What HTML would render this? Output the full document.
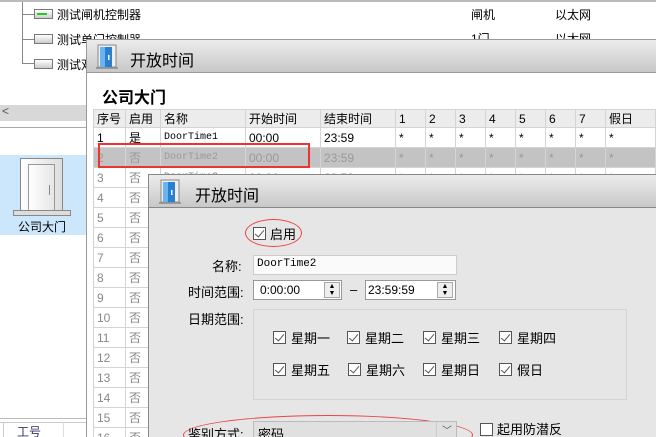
<!DOCTYPE html>
<html><head><meta charset="utf-8"><style>
*{margin:0;padding:0;box-sizing:border-box}
html{overflow:hidden}
body{width:656px;height:437px;overflow:hidden;position:relative;background:#fff;font-family:"Liberation Sans","Noto Sans CJK SC",sans-serif;font-size:12px;color:#000}
.a{position:absolute;white-space:nowrap}
.mono{font-family:"Liberation Mono","Noto Sans CJK SC",monospace}
td.mono{font-size:10px}
.tb{background:linear-gradient(#ececec,#c8c8c8);border-bottom:1px solid #999}
table{border-collapse:collapse;position:absolute;left:93px;top:109px;table-layout:fixed}
td{border:1px solid #d4d4d4;height:20px;padding:0 3px;font-size:12px;white-space:nowrap;overflow:hidden}
tr.h td{height:17px;background:#ececec;font-size:12px}
tr.g td{background:#c3c3c3;color:#999}
tr.d td{color:#888}
.cb{position:absolute;width:13px;height:13px;border:1px solid #555;background:#fff}
.cb.c::after{content:"";position:absolute;left:3px;top:0px;width:4px;height:8px;border:solid #555;border-width:0 1.5px 1.5px 0;transform:rotate(40deg)}
</style></head><body>
<div class="a" style="left:0;top:0;width:656px;height:2px;background:#bbb"></div>
<div class="a" style="left:22px;top:2px;width:1px;height:62px;background:#888"></div>
<div class="a" style="left:22px;top:14px;width:12px;height:1px;background:#888"></div>
<div class="a" style="left:22px;top:39px;width:12px;height:1px;background:#888"></div>
<div class="a" style="left:22px;top:63px;width:12px;height:1px;background:#888"></div>
<div class="a" style="left:34px;top:9px;width:19px;height:10px;border:1px solid #777;background:linear-gradient(#fff,#ccc)"><div style="margin:3px 2px;height:2px;width:10px;background:#2c2"></div></div>
<div class="a" style="left:34px;top:34px;width:19px;height:10px;border:1px solid #777;background:linear-gradient(#fff,#ccc)"></div>
<div class="a" style="left:34px;top:59px;width:19px;height:10px;border:1px solid #777;background:linear-gradient(#fff,#ccc)"></div>
<div class="a" style="left:57px;top:6px;font-size:12px">测试闸机控制器</div>
<div class="a" style="left:57px;top:31px;font-size:12px">测试单门控制器</div>
<div class="a" style="left:57px;top:56px;font-size:12px">测试双</div>
<div class="a" style="left:471px;top:6px">闸机</div>
<div class="a" style="left:555px;top:6px">以太网</div>
<div class="a" style="left:471px;top:30px">1门</div>
<div class="a" style="left:555px;top:30px">以太网</div>
<div class="a" style="left:0;top:105px;width:86px;height:16px;background:#d8d8d8"></div>
<div class="a" style="left:2px;top:104px;font-size:12px;color:#555">&lt;</div>
<div class="a" style="left:0;top:127px;width:86px;height:1px;background:#aaa"></div>
<div class="a" style="left:0;top:155px;width:86px;height:80px;background:#cce6fb"></div>
<div class="a" style="left:20px;top:158px;width:43px;height:52px;border:1px solid #888;border-bottom:none;background:linear-gradient(90deg,#fff,#ddd)"><div style="position:absolute;left:7px;top:5px;width:27px;height:47px;border:1px solid #999;border-bottom:none;background:linear-gradient(90deg,#fff,#e6e6e6)"><div style="position:absolute;left:20px;top:20px;width:1px;height:10px;background:#888"></div></div></div>
<div class="a" style="left:13px;top:210px;width:58px;height:6px;border:1px solid #888;background:#ddd"></div>
<div class="a" style="left:18px;top:218px;font-size:12px">公司大门</div>
<div class="a" style="left:0;top:418px;width:86px;height:1px;background:#bbb"></div>
<div class="a" style="left:0;top:422px;width:86px;height:15px;border-top:1px solid #ccc"></div>
<div class="a" style="left:3px;top:422px;width:1px;height:15px;background:#ccc"></div>
<div class="a" style="left:17px;top:423px;color:#336">工号</div>
<div class="a" style="left:63px;top:422px;width:1px;height:15px;background:#ddd"></div>

<div class="a" style="left:86px;top:39px;width:570px;height:398px;background:#fff;border-left:1px solid #999;border-top:1px solid #999"></div>
<div class="a tb" style="left:87px;top:40px;width:569px;height:33px"></div>
<svg class="a" style="left:95px;top:44px" width="24" height="26"><rect x="1" y="23" width="22" height="2" fill="#999"/><rect x="3" y="1" width="18" height="22" fill="#eee" stroke="#888"/><rect x="5" y="3" width="12" height="20" fill="#2a7fd0"/><rect x="5" y="3" width="5" height="20" fill="#6ab4ef"/><rect x="13" y="11" width="1.5" height="5" fill="#fff"/></svg>
<div class="a" style="left:130px;top:47px;font-size:16px">开放时间</div>
<div class="a" style="left:102px;top:84px;font-size:16px;font-weight:bold">公司大门</div>
<table>
<colgroup><col style="width:32px"><col style="width:35px"><col style="width:85px"><col style="width:75px"><col style="width:75px"><col style="width:30px"><col style="width:30px"><col style="width:30px"><col style="width:30px"><col style="width:30px"><col style="width:30px"><col style="width:30px"><col style="width:50px"></colgroup>
<tr class="h"><td>序号</td><td>启用</td><td>名称</td><td>开始时间</td><td>结束时间</td><td>1</td><td>2</td><td>3</td><td>4</td><td>5</td><td>6</td><td>7</td><td>假日</td></tr>
<tr><td>1</td><td>是</td><td class="mono">DoorTime1</td><td>00:00</td><td>23:59</td><td>*</td><td>*</td><td>*</td><td>*</td><td>*</td><td>*</td><td>*</td><td>*</td></tr>
<tr class="g"><td>2</td><td>否</td><td class="mono">DoorTime2</td><td>00:00</td><td>23:59</td><td>*</td><td>*</td><td>*</td><td>*</td><td>*</td><td>*</td><td>*</td><td>*</td></tr>
<tr class="d"><td>3</td><td>否</td><td class="mono">DoorTime3</td><td>00:00</td><td>23:59</td><td>*</td><td>*</td><td>*</td><td>*</td><td>*</td><td>*</td><td>*</td><td>*</td></tr>
<tr class="d"><td>4</td><td>否</td><td></td><td></td><td></td><td></td><td></td><td></td><td></td><td></td><td></td><td></td><td></td></tr>
<tr class="d"><td>5</td><td>否</td><td></td><td></td><td></td><td></td><td></td><td></td><td></td><td></td><td></td><td></td><td></td></tr>
<tr class="d"><td>6</td><td>否</td><td></td><td></td><td></td><td></td><td></td><td></td><td></td><td></td><td></td><td></td><td></td></tr>
<tr class="d"><td>7</td><td>否</td><td></td><td></td><td></td><td></td><td></td><td></td><td></td><td></td><td></td><td></td><td></td></tr>
<tr class="d"><td>8</td><td>否</td><td></td><td></td><td></td><td></td><td></td><td></td><td></td><td></td><td></td><td></td><td></td></tr>
<tr class="d"><td>9</td><td>否</td><td></td><td></td><td></td><td></td><td></td><td></td><td></td><td></td><td></td><td></td><td></td></tr>
<tr class="d"><td>10</td><td>否</td><td></td><td></td><td></td><td></td><td></td><td></td><td></td><td></td><td></td><td></td><td></td></tr>
<tr class="d"><td>11</td><td>否</td><td></td><td></td><td></td><td></td><td></td><td></td><td></td><td></td><td></td><td></td><td></td></tr>
<tr class="d"><td>12</td><td>否</td><td></td><td></td><td></td><td></td><td></td><td></td><td></td><td></td><td></td><td></td><td></td></tr>
<tr class="d"><td>13</td><td>否</td><td></td><td></td><td></td><td></td><td></td><td></td><td></td><td></td><td></td><td></td><td></td></tr>
<tr class="d"><td>14</td><td>否</td><td></td><td></td><td></td><td></td><td></td><td></td><td></td><td></td><td></td><td></td><td></td></tr>
<tr class="d"><td>15</td><td>否</td><td></td><td></td><td></td><td></td><td></td><td></td><td></td><td></td><td></td><td></td><td></td></tr>
<tr class="d"><td>16</td><td>否</td><td></td><td></td><td></td><td></td><td></td><td></td><td></td><td></td><td></td><td></td><td></td></tr>
</table>
<div class="a" style="left:98px;top:143px;width:212px;height:25px;border:2px solid #e33"></div>

<div class="a" style="left:148px;top:174px;width:508px;height:263px;background:#e6e6e6;border-left:1px solid #888;border-top:1px solid #888"></div>
<div class="a tb" style="left:149px;top:175px;width:507px;height:33px;border-bottom:1px solid #888"></div>
<svg class="a" style="left:158px;top:179px" width="24" height="26"><rect x="1" y="23" width="22" height="2" fill="#999"/><rect x="3" y="1" width="18" height="22" fill="#eee" stroke="#888"/><rect x="5" y="3" width="12" height="20" fill="#2a7fd0"/><rect x="5" y="3" width="5" height="20" fill="#6ab4ef"/><rect x="13" y="11" width="1.5" height="5" fill="#fff"/></svg>
<div class="a" style="left:195px;top:182px;font-size:16px">开放时间</div>

<div class="a" style="left:245px;top:219px;width:57px;height:28px;border:1px solid #e44;border-radius:50%"></div>
<div class="cb c" style="left:253px;top:227px"></div>
<div class="a" style="left:270px;top:224px;font-size:13px">启用</div>

<div class="a" style="left:212px;top:256px;font-size:13px">名称:</div>
<div class="a mono" style="left:253px;top:255px;width:204px;height:20px;background:#fafafa;border:1px solid #ccc;padding:2px 3px;font-size:11px">DoorTime2</div>

<div class="a" style="left:188px;top:282px;font-size:13px">时间范围:</div>
<div class="a" style="left:253px;top:280px;width:89px;height:20px;background:#fff;border:1px solid #999;padding:2px 6px;font-size:12px">0:00:00</div>
<div class="a" style="left:324px;top:282px;width:16px;height:16px;border:1px solid #aaa;background:#eee;font-size:7px;line-height:7px;text-align:center">▲<br>▼</div>
<div class="a" style="left:350px;top:282px;font-size:13px">–</div>
<div class="a" style="left:365px;top:280px;width:91px;height:20px;background:#fff;border:1px solid #999;padding:2px 2px;font-size:12px">23:59:59</div>
<div class="a" style="left:437px;top:282px;width:16px;height:16px;border:1px solid #aaa;background:#eee;font-size:7px;line-height:7px;text-align:center">▲<br>▼</div>

<div class="a" style="left:188px;top:309px;font-size:13px">日期范围:</div>
<div class="a" style="left:253px;top:309px;width:374px;height:91px;border:1px solid #d4d4d4"></div>
<div class="cb c" style="left:273px;top:331px"></div><div class="a" style="left:291px;top:328px;font-size:13px">星期一</div>
<div class="cb c" style="left:347px;top:331px"></div><div class="a" style="left:365px;top:328px;font-size:13px">星期二</div>
<div class="cb c" style="left:423px;top:331px"></div><div class="a" style="left:441px;top:328px;font-size:13px">星期三</div>
<div class="cb c" style="left:499px;top:331px"></div><div class="a" style="left:517px;top:328px;font-size:13px">星期四</div>
<div class="cb c" style="left:273px;top:363px"></div><div class="a" style="left:291px;top:360px;font-size:13px">星期五</div>
<div class="cb c" style="left:348px;top:363px"></div><div class="a" style="left:366px;top:360px;font-size:13px">星期六</div>
<div class="cb c" style="left:423px;top:363px"></div><div class="a" style="left:441px;top:360px;font-size:13px">星期日</div>
<div class="cb c" style="left:499px;top:363px"></div><div class="a" style="left:517px;top:360px;font-size:13px">假日</div>

<div class="a" style="left:183px;top:415px;width:290px;height:40px;border:1px solid #e44;border-radius:50%"></div>
<div class="a" style="left:188px;top:424px;font-size:13px">鉴别方式:</div>
<div class="a" style="left:253px;top:421px;width:204px;height:20px;background:#e0e0e0;border:1px solid #bbb;padding:2px 4px;font-size:13px">密码</div>
<div class="a" style="left:436px;top:422px;width:1px;height:16px;background:#ccc"></div>
<div class="a" style="left:442px;top:422px;font-size:10px;color:#555">﹀</div>
<div class="cb" style="left:480px;top:423px"></div>
<div class="a" style="left:497px;top:419px;font-size:13px">起用防潜反</div>
</body></html>
